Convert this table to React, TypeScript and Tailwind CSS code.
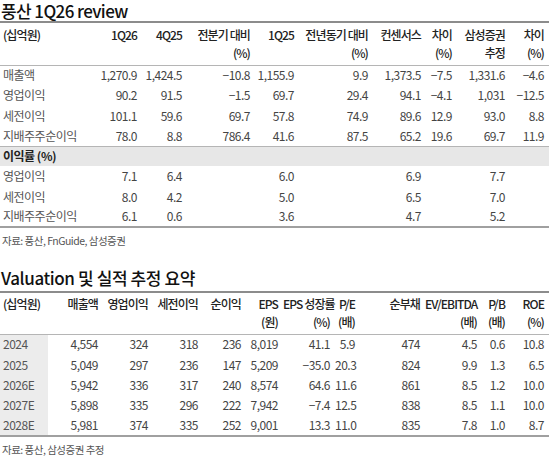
import React from "react";

const font = { fontFamily: '"Noto Sans CJK KR", "Noto Sans", sans-serif' };

type Row = { label: string; vals: string[] };

const t1Widths = [100, 42, 45, 68, 44, 74, 53, 31, 53, 39];
const t1Rows: Row[] = [
  { label: "매출액", vals: ["1,270.9", "1,424.5", "−10.8", "1,155.9", "9.9", "1,373.5", "−7.5", "1,331.6", "−4.6"] },
  { label: "영업이익", vals: ["90.2", "91.5", "−1.5", "69.7", "29.4", "94.1", "−4.1", "1,031", "−12.5"] },
  { label: "세전이익", vals: ["101.1", "59.6", "69.7", "57.8", "74.9", "89.6", "12.9", "93.0", "8.8"] },
  { label: "지배주주순이익", vals: ["78.0", "8.8", "786.4", "41.6", "87.5", "65.2", "19.6", "69.7", "11.9"] },
];
const t1Margin: Row[] = [
  { label: "영업이익", vals: ["7.1", "6.4", "", "6.0", "", "6.9", "", "7.7", ""] },
  { label: "세전이익", vals: ["8.0", "4.2", "", "5.0", "", "6.5", "", "7.0", ""] },
  { label: "지배주주순이익", vals: ["6.1", "0.6", "", "3.6", "", "4.7", "", "5.2", ""] },
];
const t1Head: [string, string][] = [
  ["1Q26", ""],
  ["4Q25", ""],
  ["전분기 대비", "(%)"],
  ["1Q25", ""],
  ["전년동기 대비", "(%)"],
  ["컨센서스", ""],
  ["차이", "(%)"],
  ["삼성증권", "추정"],
  ["차이", "(%)"],
];

const t2Widths = [48, 55, 50, 50, 43, 37, 52, 25, 65, 57, 28, 39];
const t2Head: [string, string][] = [
  ["매출액", ""],
  ["영업이익", ""],
  ["세전이익", ""],
  ["순이익", ""],
  ["EPS", "(원)"],
  ["EPS 성장률", "(%)"],
  ["P/E", "(배)"],
  ["순부채", ""],
  ["EV/EBITDA", "(배)"],
  ["P/B", "(배)"],
  ["ROE", "(%)"],
];
const t2Rows: Row[] = [
  { label: "2024", vals: ["4,554", "324", "318", "236", "8,019", "41.1", "5.9", "474", "4.5", "0.6", "10.8"] },
  { label: "2025", vals: ["5,049", "297", "236", "147", "5,209", "−35.0", "20.3", "824", "9.9", "1.3", "6.5"] },
  { label: "2026E", vals: ["5,942", "336", "317", "240", "8,574", "64.6", "11.6", "861", "8.5", "1.2", "10.0"] },
  { label: "2027E", vals: ["5,898", "335", "296", "222", "7,942", "−7.4", "12.5", "838", "8.5", "1.1", "10.0"] },
  { label: "2028E", vals: ["5,981", "374", "335", "252", "9,001", "13.3", "11.0", "835", "7.8", "1.0", "8.7"] },
];

const thBase = "text-right font-medium text-[#222] whitespace-nowrap tracking-[-0.9px]";

export default function App() {
  return (
    <div className="w-[549px] h-[470px] bg-white overflow-hidden text-[#444]" style={font}>
      {/* Title 1 */}
      <div className="pl-[1px] text-[17px] leading-[21px] font-medium text-[#111] tracking-[-0.6px]">
        풍산 1Q26 review
      </div>
      <table className="table-fixed border-collapse w-[549px] text-[12px] tracking-[-0.5px]">
        <colgroup>
          {t1Widths.map((w, i) => (
            <col key={i} style={{ width: w }} />
          ))}
        </colgroup>
        <thead className="border-t-[2px] border-t-[#8c8c8c] border-b border-b-[#b5b5b5]">
          <tr className="h-[22px]">
            <th className="pl-[3px] text-left font-medium text-[#222] align-bottom tracking-[-0.9px]">(십억원)</th>
            {t1Head.map((h, i) => (
              <th key={i} className={"pr-[5px] align-bottom " + thBase}>
                {h[0]}
              </th>
            ))}
          </tr>
          <tr className="h-[21px]">
            <th />
            {t1Head.map((h, i) => (
              <th key={i} className={"pr-[5px] align-top " + thBase}>
                {h[1]}
              </th>
            ))}
          </tr>
        </thead>
        <tbody>
          {t1Rows.map((r, ri) => (
            <tr key={ri} className="h-[20.3px]">
              <td className="pl-[3px] text-left text-[#555] whitespace-nowrap">{r.label}</td>
              {r.vals.map((v, i) => (
                <td key={i} className="pr-[5px] text-right whitespace-nowrap">
                  {v}
                </td>
              ))}
            </tr>
          ))}
          <tr className="h-[20px] bg-[#e7e7e7] border-t border-t-[#b5b5b5]">
            <td colSpan={10} className="pl-[3px] text-left font-bold text-[#222]">
              이익률 (%)
            </td>
          </tr>
          {t1Margin.map((r, ri) => (
            <tr
              key={ri}
              className={"h-[20.3px]" + (ri === t1Margin.length - 1 ? " border-b-[2px] border-b-[#a0a0a0]" : "")}
            >
              <td className="pl-[3px] text-left text-[#555] whitespace-nowrap">{r.label}</td>
              {r.vals.map((v, i) => (
                <td key={i} className="pr-[5px] text-right whitespace-nowrap">
                  {v}
                </td>
              ))}
            </tr>
          ))}
        </tbody>
      </table>
      <div className="h-[26px] pl-[2px] pt-[5px] text-[10.5px] text-[#555] tracking-[-0.5px]">
        자료: 풍산, FnGuide, 삼성증권
      </div>

      {/* Title 2 */}
      <div className="mt-[13px] pl-[1px] text-[17px] leading-[22px] font-medium text-[#111] tracking-[-0.4px]">
        Valuation 및 실적 추정 요약
      </div>
      <table className="mt-[2px] table-fixed border-collapse w-[549px] text-[12px] tracking-[-0.5px]">
        <colgroup>
          {t2Widths.map((w, i) => (
            <col key={i} style={{ width: w }} />
          ))}
        </colgroup>
        <thead className="border-t-[2px] border-t-[#8c8c8c] border-b border-b-[#b5b5b5]">
          <tr className="h-[21px]">
            <th className="pl-[3px] text-left font-medium text-[#222] align-bottom whitespace-nowrap tracking-[-0.9px]">
              (십억원)
            </th>
            {t2Head.map((h, i) => (
              <th key={i} className={"pr-[5px] align-bottom " + thBase}>
                {h[0]}
              </th>
            ))}
          </tr>
          <tr className="h-[21px]">
            <th />
            {t2Head.map((h, i) => (
              <th key={i} className={"pr-[5px] align-top " + thBase}>
                {h[1]}
              </th>
            ))}
          </tr>
        </thead>
        <tbody className="border-b-[2px] border-b-[#a0a0a0]">
          {t2Rows.map((r, ri) => (
            <tr key={ri} className="h-[20.3px]">
              <td className="pl-[3px] text-left bg-[#ececec] text-[#555] whitespace-nowrap">{r.label}</td>
              {r.vals.map((v, i) => (
                <td key={i} className="pr-[5px] text-right whitespace-nowrap">
                  {v}
                </td>
              ))}
            </tr>
          ))}
        </tbody>
      </table>
      <div className="pl-[2px] pt-[5px] text-[10.5px] text-[#555] tracking-[-0.5px]">자료: 풍산, 삼성증권 추정</div>
    </div>
  );
}
